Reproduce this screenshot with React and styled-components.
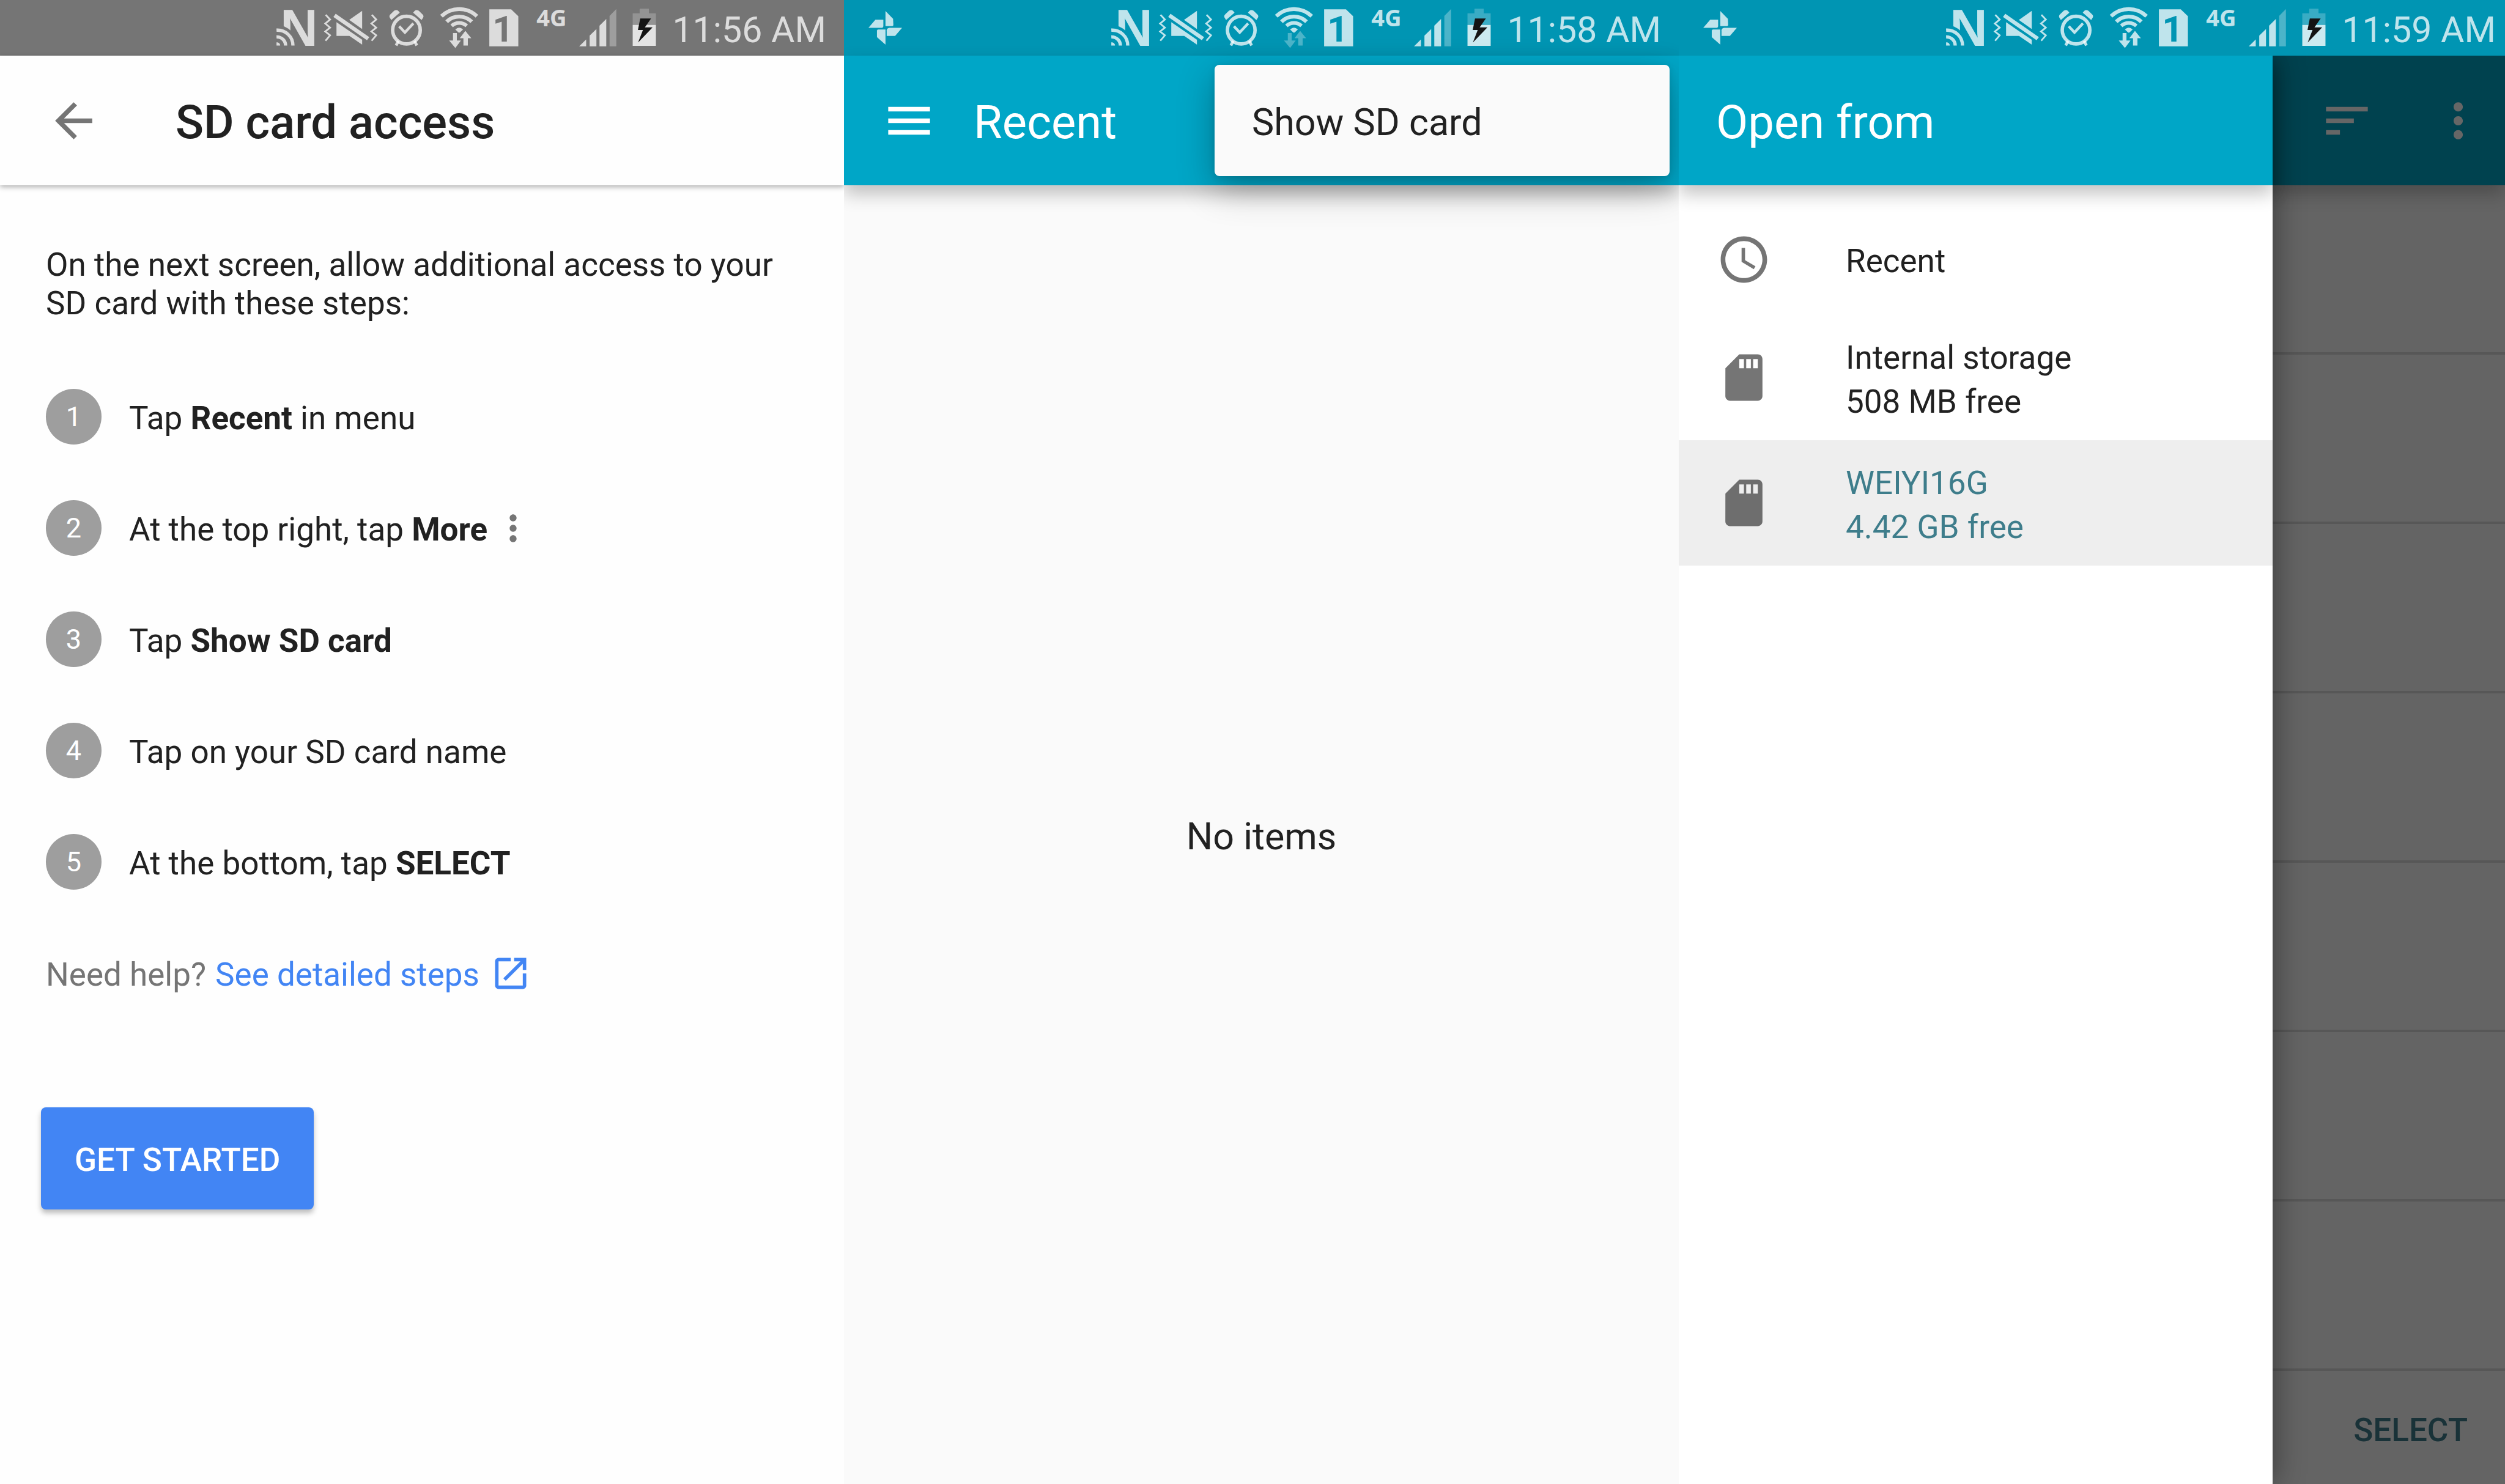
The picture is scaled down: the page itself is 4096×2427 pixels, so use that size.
import React from 'react';
import styled, { createGlobalStyle } from 'styled-components';
import {
  MdArrowBack,
  MdMenu,
  MdMoreVert,
  MdOpenInNew,
  MdSort,
  MdAccessTime,
  MdSdStorage,
} from 'react-icons/md';

const color = {
  text: '#212121',
  grey: '#757575',
  teal: '#00a6c7',
  tealDark: '#0095b3',
  accent: '#3e7d8b',
  blue: '#4285f4',
};

const GlobalStyle = createGlobalStyle`
  *, *::before, *::after { box-sizing: border-box; }
  body { margin: 0; }
  body, button { font-family: Roboto, "Liberation Sans", sans-serif; }
  h1, p, ol, ul { margin: 0; padding: 0; font-weight: 400; }
  ol, ul { list-style: none; }
  button { margin: 0; padding: 0; border: 0; background: none; color: inherit; cursor: pointer; }
  svg { display: block; flex: none; overflow: visible; }
`;

/* ---------- shared layout ---------- */

const Page = styled.main`
  display: grid;
  grid-template-columns: 1380fr 1365fr 1351fr;
  min-height: 100vh;
  color: ${color.text};
`;

const Screen = styled.section`
  position: relative;
  display: flex;
  flex-direction: column;
  min-width: 0;
  overflow: hidden;
  background: ${(p) => p.$bg};
`;

/* Text sits slightly under the optical centre of its row. */
const Label = styled.span`
  padding-top: 6px;
  font-weight: ${(p) => p.$weight || 400};
  white-space: nowrap;
`;

const IconButton = styled.button`
  display: flex;
  width: 91px;
  height: 91px;
  font-size: 91px;
`;

const AppBar = styled.header`
  position: relative;
  z-index: 1;
  display: flex;
  flex: none;
  align-items: center;
  justify-content: ${(p) => (p.$end ? 'flex-end' : 'flex-start')};
  gap: ${(p) => p.$gap || 0}px;
  height: 212px;
  padding: 0 ${(p) => p.$right || 61}px 0 ${(p) => p.$left || 61}px;
  background: ${(p) => p.$bg};
  color: ${(p) => p.$fg};
  box-shadow: ${(p) =>
    p.$flat ? '0 3px 8px rgba(0, 0, 0, 0.3)' : '0 14px 28px rgba(0, 0, 0, 0.24)'};
`;

const Title = styled.h1`
  padding-top: 6px;
  font-size: 76px;
  line-height: 90px;
  font-weight: ${(p) => p.$weight || 400};
  white-space: nowrap;
`;

/* ---------- status bar ---------- */

const StatusBar = styled.div`
  display: flex;
  flex: none;
  align-items: center;
  justify-content: space-between;
  height: 91px;
  padding: 0 ${(p) => p.$right}px 0 40px;
  background: ${(p) => p.$bg};
  color: rgba(255, 255, 255, 0.75);
`;

const StatusIcons = styled.div`
  display: flex;
  align-items: center;
  gap: 18px;
  margin-left: auto;
`;

const Network = styled.span`
  align-self: flex-start;
  font: 700 38px/56px "Noto Sans", "Open Sans", sans-serif;
`;

const Clock = styled.time`
  padding-top: 6px;
  font-size: 59px;
  line-height: 70px;
  white-space: nowrap;
`;

function StatusIcon({ x, w, width, children }) {
  return (
    <svg width={width} height="91" viewBox={`${x} 0 ${w} 288`} fill="currentColor" aria-hidden="true">
      {children}
    </svg>
  );
}

const Pinwheel = () => (
  <svg width="55" height="91" viewBox="0 0 58 96" fill="currentColor" aria-hidden="true">
    <path d="M29.4 19 42.5 32.500 43 43Q43 45 41 45H29.400Z" />
    <path d="M0 48 12 34H25.700V45Q25.500 48 22 48Z" />
    <path d="M14.700 53Q14.700 51 17 51H29.400V77L14.700 64Z" />
    <path d="M36 48H58L46 62H31.500V52Q32 48.500 36 48Z" />
  </svg>
);

const Nfc = ({ bg }) => (
  <StatusIcon x={51} w={189} width={60}>
    <text x="70" y="236" fontFamily="Liberation Sans" fontWeight="700" fontSize="269">N</text>
    <path d="M51 129A107 107 0 0 1 158 238H51Z" fill={bg} />
    <path d="M51 156A80 80 0 0 1 136 236M51 191A45 45 0 0 1 98 236" fill="none" stroke="currentColor" strokeWidth="17" />
    <path d="M51 219A17 17 0 0 1 70 236H51Z" />
  </StatusIcon>
);

const zigzag = 'l23 24-25 21 25 21-25 20 25 20-24 28';

const Muted = () => (
  <StatusIcon x={294} w={282} width={89}>
    <path
      d={`M302 77${zigzag}M541 77${zigzag}`}
      fill="none"
      stroke="currentColor"
      strokeWidth="9"
    />
    <path d="M491 56V150L424 103ZM358 115 491 206V231L425 186H358ZM354 71 528 192 516 208 342 88Z" />
  </StatusIcon>
);

const Alarm = () => (
  <StatusIcon x={634} w={204} width={64}>
    <circle cx="722" cy="156" r="72" fill="none" stroke="currentColor" strokeWidth="18" />
    <path d="M684 136 714 168 758 121" fill="none" stroke="currentColor" strokeWidth="14" />
    <path d="M643 103 687 65 680 56Q670 48 658 55L640 72Q628 82 637 94Z" />
    <path d="M801 103 757 65 764 56Q774 48 786 55L804 72Q816 82 807 94Z" />
    <path d="M680 212 668 236M764 212 776 236" stroke="currentColor" strokeWidth="15" />
  </StatusIcon>
);

const Wifi = ({ idle }) => (
  <StatusIcon x={895} w={200} width={63}>
    <g fill="none" stroke="currentColor">
      <path d="M904 84A132.500 132.500 0 0 1 1088 84" strokeWidth="20" />
      <path d="M931 112A94 94 0 0 1 1061 112" strokeWidth="20" />
      <path d="M957 134A58 58 0 0 1 1035 134" strokeWidth="19" />
    </g>
    <path d="M976 153Q996 134 1016 153L1000 168Q996 171 992 168Z" />
    <g opacity={idle ? 0.4 : 1}>
      <path d="M964 171H984V210H1005L976 249 944 210H964Z" />
      <path d="M1028 160 1059 198H1041V236H1018V198H999Z" />
    </g>
  </StatusIcon>
);

const Sim = ({ bg }) => (
  <StatusIcon x={1152} w={186} width={59}>
    <path d="M1152 48H1265L1302 84V240H1152Z" />
    <text x="1223" y="216" textAnchor="middle" fontFamily="Roboto" fontWeight="700" fontSize="190" fill={bg}>
      1
    </text>
  </StatusIcon>
);

const Signal = () => (
  <StatusIcon x={171} w={201} width={64}>
    <path d="M180 240 216 204V240ZM234 240V184L269 150V240ZM285 240V133L320 98V240Z" />
    <path d="M337 240V82L372 47V240Z" opacity="0.4" />
  </StatusIcon>
);

const Battery = () => (
  <StatusIcon x={429} w={174} width={55}>
    <path d="M492 45H540V69H576V129H456V69H492Z" opacity="0.3" />
    <path d="M456 129H576V237H456Z" fill="#fff" fillOpacity="0.8" />
    <path d="M495 96H551L519 142H559L484 220 509 155H483Z" fill="#141414" />
  </StatusIcon>
);

function Status({ time, bg, right, app, idle }) {
  return (
    <StatusBar $bg={bg} $right={right}>
      {app && <Pinwheel />}
      <StatusIcons>
        <Nfc bg={bg} />
        <Muted />
        <Alarm />
        <Wifi idle={idle} />
        <Sim bg={bg} />
        <Network>4G</Network>
        <Signal />
        <Battery />
        <Clock>{time}</Clock>
      </StatusIcons>
    </StatusBar>
  );
}

/* ---------- instructions screen ---------- */

const Instructions = styled.div`
  display: flex;
  flex-direction: column;
  align-items: flex-start;
  gap: 174px;
  padding: 99px 67px;
  font-size: 53px;
  line-height: 63px;
`;

const Copy = styled.div`
  padding: 0 8px;
`;

const Steps = styled.ol`
  display: flex;
  flex-direction: column;
  gap: 91px;
  margin: 108px 0 91px;
`;

const Step = styled.li`
  display: flex;
  align-items: center;
  height: 91px;

  > svg {
    margin-left: 8px;
    color: ${color.grey};
  }
`;

const Bullet = styled.span`
  display: grid;
  flex: none;
  place-items: center;
  width: 91px;
  height: 91px;
  margin-right: 45px;
  border-radius: 50%;
  background: #9e9e9e;
  color: #fff;
  font-size: 45px;
`;

const Help = styled.p`
  display: flex;
  align-items: center;
  gap: 15px;
  height: 91px;
  color: ${color.grey};
`;

const HelpLink = styled.a`
  display: flex;
  align-items: center;
  gap: 17px;
  color: ${color.blue};
  text-decoration: none;
`;

const PrimaryButton = styled.button`
  display: flex;
  align-items: center;
  height: 167px;
  padding: 0 55px;
  border-radius: 8px;
  background: ${color.blue};
  color: #fff;
  font-size: 53px;
  line-height: 63px;
  box-shadow: 0 6px 9px rgba(0, 0, 0, 0.26);
`;

const steps = [
  { text: <>Tap <strong>Recent</strong> in menu</> },
  { text: <>At the top right, tap <strong>More</strong></>, more: true },
  { text: <>Tap <strong>Show SD card</strong></> },
  { text: <>Tap on your SD card name</> },
  { text: <>At the bottom, tap <strong>SELECT</strong></> },
];

function InstructionsScreen() {
  return (
    <Screen $bg="#fefefe">
      <Status time="11:56 AM" bg={color.grey} right={29} />
      <AppBar $bg="#fefefe" $fg={color.text} $left={75} $gap={121} $flat>
        <IconButton aria-label="Back">
          <MdArrowBack color={color.grey} />
        </IconButton>
        <Title $weight={500}>SD card access</Title>
      </AppBar>
      <Instructions>
        <Copy>
          <p>On the next screen, allow additional access to your SD card with these steps:</p>
          <Steps>
            {steps.map((step, i) => (
              <Step key={i}>
                <Bullet>{i + 1}</Bullet>
                <Label>{step.text}</Label>
                {step.more && <MdMoreVert size={68} />}
              </Step>
            ))}
          </Steps>
          <Help>
            <Label>Need help?</Label>
            <HelpLink href="#steps">
              <Label>See detailed steps</Label>
              <MdOpenInNew size={68} />
            </HelpLink>
          </Help>
        </Copy>
        <PrimaryButton>
          <Label $weight={500}>GET STARTED</Label>
        </PrimaryButton>
      </Instructions>
    </Screen>
  );
}

/* ---------- recent files screen ---------- */

const Popup = styled.div`
  position: absolute;
  z-index: 2;
  top: 106px;
  right: 15px;
  width: 744px;
  border-radius: 8px;
  background: #fafafa;
  box-shadow: 0 20px 60px rgba(0, 0, 0, 0.3), 0 2px 12px rgba(0, 0, 0, 0.12);
`;

const PopupItem = styled.button`
  display: flex;
  align-items: center;
  width: 100%;
  height: 182px;
  padding: 0 61px;
  font-size: 61px;
  line-height: 72px;
`;

const Empty = styled.p`
  display: grid;
  flex: 1;
  place-items: center;
  font-size: 61px;
  line-height: 72px;
`;

function RecentScreen() {
  return (
    <Screen $bg="#fafafa">
      <Status time="11:58 AM" bg={color.tealDark} right={29} app idle />
      <AppBar $bg={color.teal} $fg="#fff" $gap={60}>
        <IconButton aria-label="Menu">
          <MdMenu />
        </IconButton>
        <Title>Recent</Title>
      </AppBar>
      <Popup role="menu">
        <PopupItem role="menuitem">
          <Label>Show SD card</Label>
        </PopupItem>
      </Popup>
      <Empty>
        <Label>No items</Label>
      </Empty>
    </Screen>
  );
}

/* ---------- drawer screen ---------- */

const DrawerBody = styled.div`
  display: grid;
  flex: 1;
  grid-template-columns: 971fr 380fr;
  overflow: hidden;
`;

const Drawer = styled.nav`
  position: relative;
  z-index: 2;
  min-width: 0;
  background: #fff;
  box-shadow: 0 0 48px rgba(0, 0, 0, 0.45);
`;

const Roots = styled.ul`
  padding-top: 30px;
`;

const Root = styled.button`
  display: flex;
  align-items: center;
  gap: 121px;
  width: 100%;
  height: ${(p) => (p.$tall ? 205 : 182)}px;
  padding: 0 61px;
  background: ${(p) => (p.$selected ? '#eee' : 'transparent')};
  color: ${(p) => (p.$selected ? color.accent : color.text)};
  font-size: 53px;
  line-height: 72px;
  text-align: left;

  > svg {
    color: ${(p) => (p.$selected ? '#6e6e6e' : color.grey)};
  }
`;

const Dimmed = styled.div`
  display: flex;
  flex-direction: column;
  min-width: 0;
  background: #646464;
`;

const DimRow = styled.li`
  height: 277px;
  border-bottom: 4px solid #575757;
`;

const Footer = styled.footer`
  display: flex;
  flex: 1;
  align-items: center;
  justify-content: flex-end;
  padding: 3px 61px 0;
  color: #193238;
  font-size: 53px;
  line-height: 63px;

  button {
    display: flex;
    font-size: inherit;
    line-height: inherit;
  }
`;

const roots = [
  { name: 'Recent', Icon: MdAccessTime },
  { name: 'Internal storage', free: '508 MB free', Icon: MdSdStorage },
  { name: 'WEIYI16G', free: '4.42 GB free', Icon: MdSdStorage, selected: true },
];

const hiddenRows = [0, 1, 2, 3, 4, 5, 6];

function DrawerScreen() {
  return (
    <Screen $bg="#fff">
      <Status time="11:59 AM" bg={color.tealDark} right={15} app />
      <DrawerBody>
        <Drawer>
          <AppBar $bg={color.teal} $fg="#fff">
            <Title>Open from</Title>
          </AppBar>
          <Roots>
            {roots.map(({ name, free, Icon, selected }) => (
              <li key={name}>
                <Root $tall={Boolean(free)} $selected={selected}>
                  <Icon size={91} />
                  <Label>
                    {name}
                    {free && <br />}
                    {free}
                  </Label>
                </Root>
              </li>
            ))}
          </Roots>
        </Drawer>
        <Dimmed>
          <AppBar $bg="#00424f" $fg="#666" $gap={91} $right={31} $end>
            <IconButton aria-label="Sort">
              <MdSort />
            </IconButton>
            <IconButton aria-label="More options">
              <MdMoreVert />
            </IconButton>
          </AppBar>
          <ul>
            {hiddenRows.map((row) => (
              <DimRow key={row} />
            ))}
          </ul>
          <Footer>
            <button>
              <Label $weight={500}>SELECT</Label>
            </button>
          </Footer>
        </Dimmed>
      </DrawerBody>
    </Screen>
  );
}

export default function App() {
  return (
    <>
      <GlobalStyle />
      <Page>
        <InstructionsScreen />
        <RecentScreen />
        <DrawerScreen />
      </Page>
    </>
  );
}
